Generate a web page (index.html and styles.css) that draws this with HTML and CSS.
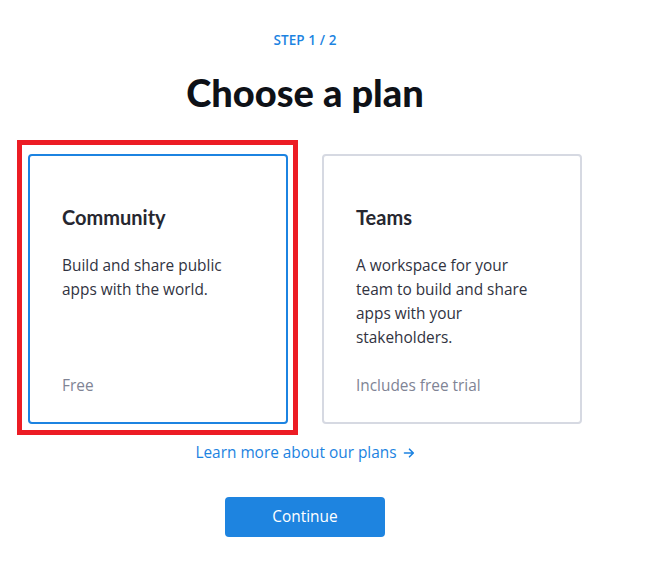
FILE: index.html
```html
<!DOCTYPE html>
<html>
<head>
<meta charset="utf-8">
<title>Choose a plan</title>
<link rel="stylesheet" href="styles.css">
</head>
<body>
<main class="page">
  <div class="step">STEP 1 / 2</div>
  <h1 class="heading">Choose a plan</h1>
  <div class="plans">
    <div class="card card-selected">
      <div class="highlight"></div>
      <h2 class="card-title">Community</h2>
      <p class="card-desc">Build and share public apps with the world.</p>
      <div class="card-price">Free</div>
    </div>
    <div class="card">
      <h2 class="card-title">Teams</h2>
      <p class="card-desc">A workspace for your team to build and share apps with your stakeholders.</p>
      <div class="card-price">Includes free trial</div>
    </div>
  </div>
  <a class="learn" href="#">Learn more about our plans <svg class="arrow" width="12" height="12" viewBox="0 0 12 12"><path d="M1.5 6h8.5M6.5 2.2L10.3 6 6.5 9.8" fill="none" stroke="currentColor" stroke-width="1.6" stroke-linecap="round" stroke-linejoin="round"/></svg></a>
  <button class="continue" type="button">Continue</button>
</main>
</body>
</html>
```
FILE: styles.css
```css
html, body {
  margin: 0;
  background: #ffffff;
}

.page {
  width: 610px;
  display: flex;
  flex-direction: column;
  align-items: center;
  padding-top: 30px;
  font-family: "Open Sans", sans-serif;
}

.step {
  font-size: 13.5px;
  line-height: 20px;
  font-weight: 600;
  color: #1c83e1;
  letter-spacing: 0.1px;
}

.heading {
  margin: 19px 0 0;
  font-family: Lato, sans-serif;
  font-size: 38px;
  line-height: 46px;
  font-weight: 900;
  color: #0e1117;
}

.plans {
  margin-top: 39px;
  display: flex;
  gap: 34px;
}

.card {
  position: relative;
  box-sizing: border-box;
  width: 260px;
  height: 270px;
  border: 2px solid #d6d9e2;
  border-radius: 4px;
  padding: 47px 32px 24px;
  display: flex;
  flex-direction: column;
}

.card-selected {
  border-color: #1c83e1;
}

.highlight {
  position: absolute;
  left: -13px;
  top: -16px;
  width: 281px;
  height: 295px;
  box-sizing: border-box;
  border: 5px solid #ec1c24;
  pointer-events: none;
}

.card-title {
  margin: 0;
  font-family: Lato, sans-serif;
  font-size: 20px;
  line-height: 28px;
  font-weight: 700;
  color: #262730;
}

.card-desc {
  margin: 23px 0 0;
  max-width: 180px;
  font-size: 15.4px;
  line-height: 24px;
  color: #31333f;
}

.card-price {
  margin-top: auto;
  font-size: 15.4px;
  line-height: 24px;
  color: #808495;
}

.learn {
  margin-top: 17px;
  font-size: 15.4px;
  line-height: 24px;
  color: #1c83e1;
  text-decoration: none;
  display: flex;
  align-items: center;
  gap: 6px;
}

.arrow {
  display: block;
}

.continue {
  margin-top: 32px;
  width: 160px;
  height: 40px;
  border: none;
  border-radius: 4px;
  background: #1e84e0;
  color: #ffffff;
  font-family: "Open Sans", sans-serif;
  font-size: 15.4px;
  line-height: 24px;
  cursor: pointer;
}
```
